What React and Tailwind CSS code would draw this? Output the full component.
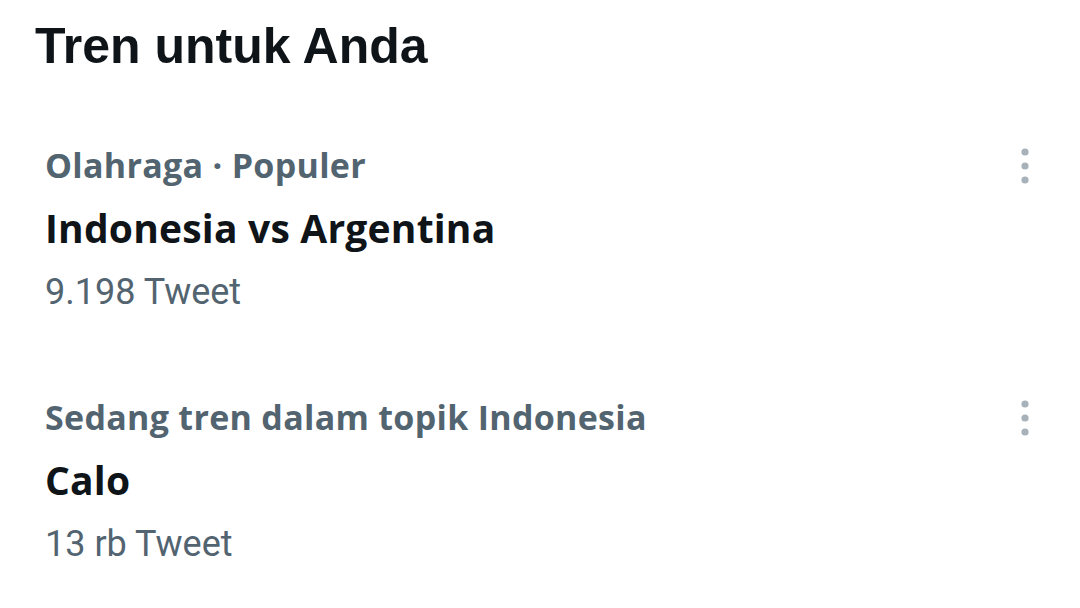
import React from "react";

const trends = [
  { id: 1, context: "Olahraga · Populer", name: "Indonesia vs Argentina", count: "9.198 Tweet" },
  { id: 2, context: "Sedang tren dalam topik Indonesia", name: "Calo", count: "13 rb Tweet" },
];

function MoreDots() {
  return (
    <svg width="10" height="38" viewBox="0 0 10 38" className="fill-[#a7b1b9]">
      <circle cx="5" cy="5" r="3.6" />
      <circle cx="5" cy="19" r="3.6" />
      <circle cx="5" cy="33" r="3.6" />
    </svg>
  );
}

function TrendItem({ trend }) {
  return (
    <div className="flex flex-col">
      <div className="flex items-center justify-between pr-[50px] h-[63px]">
        <span className="text-[34px] font-bold tracking-[0.3px] text-[#536471] [font-family:'Open_Sans',sans-serif]">
          {trend.context}
        </span>
        <MoreDots />
      </div>
      <div className="h-[63px] flex items-center text-[39px] font-bold tracking-[0.2px] text-[#0f1419] [font-family:'Open_Sans',sans-serif]">
        {trend.name}
      </div>
      <div className="h-[63px] flex items-center text-[36px] text-[#536471] [font-family:Roboto,sans-serif]">
        {trend.count}
      </div>
    </div>
  );
}

export default function App() {
  return (
    <div className="w-[1080px] h-[608px] bg-white overflow-hidden">
      <h1 className="h-[92px] flex items-center pl-[35px] text-[50px] font-bold text-[#0f1419] [font-family:'Liberation_Sans',sans-serif]">
        Tren untuk Anda
      </h1>
      <div className="mt-[42px] pl-[45px] flex flex-col gap-[63px]">
        {trends.map((trend) => (
          <TrendItem key={trend.id} trend={trend} />
        ))}
      </div>
    </div>
  );
}
